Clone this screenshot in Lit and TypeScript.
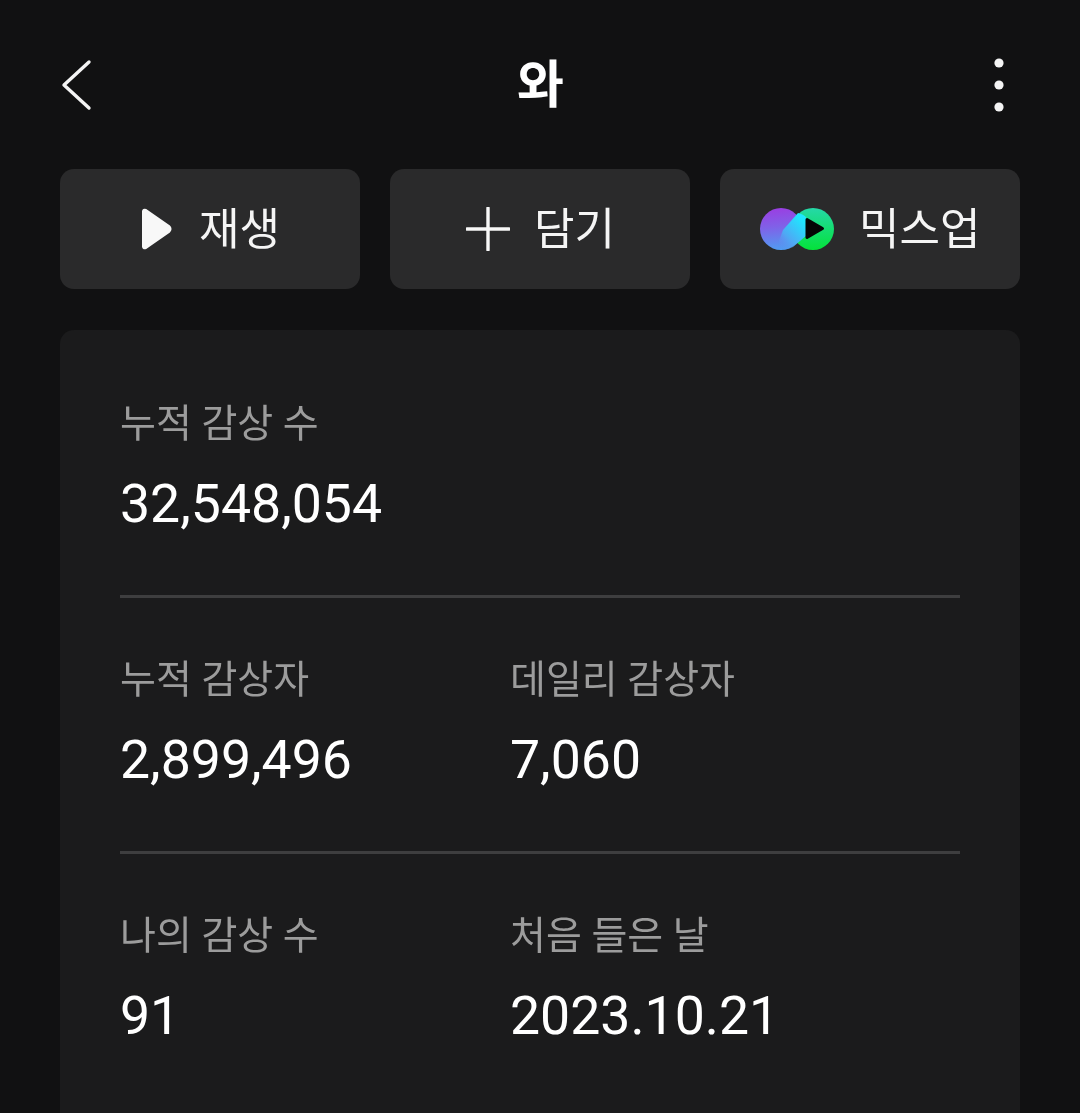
import { LitElement, html, css } from "lit";
import { customElement } from "lit/decorators.js";

@customElement("app-root")
export class AppRoot extends LitElement {
  static styles = css`
    :host {
      display: block;
      width: 1080px;
      height: 1113px;
      overflow: hidden;
      background: #111112;
      font-family: Roboto, "Noto Sans CJK KR", sans-serif;
      color: #fff;
    }
    .header {
      height: 169px;
      box-sizing: border-box;
      padding: 0 60px;
      display: grid;
      grid-template-columns: 1fr auto 1fr;
      align-items: center;
    }
    .header svg { display: block; }
    .more { justify-self: end; }
    .title {
      font-size: 51px;
      font-weight: 700;
      line-height: 51px;
      padding-top: 2px;
      will-change: transform;
    }
    .actions {
      display: grid;
      grid-template-columns: repeat(3, 300px);
      gap: 30px;
      padding: 0 60px;
    }
    .btn {
      height: 120px;
      border-radius: 14px;
      background: #2a2a2b;
      display: flex;
      align-items: center;
      justify-content: center;
      gap: 26px;
      font-size: 44px;
      color: #f5f5f5;
    }
    .btn.play { gap: 27px; }
    .btn.add { gap: 24px; }
    .btn.mix { gap: 25px; }
    .btn span {
      line-height: 44px;
      margin-top: 2px;
      will-change: transform;
    }
    .btn svg { display: block; flex: none; }
    .card {
      margin: 41px 60px 0;
      padding: 60px 60px 0;
      border-radius: 14px;
      background: #1b1b1c;
      height: 800px;
      box-sizing: border-box;
    }
    .row {
      display: grid;
      grid-template-columns: 390px 1fr;
      height: 205px;
      border-bottom: 3px solid #3e3e3f;
      margin-bottom: 48px;
    }
    .row:last-child { border-bottom: none; }
    .label {
      font-size: 39px;
      line-height: 66px;
      color: #9c9c9c;
      padding-top: 1px;
      will-change: transform;
    }
    .value {
      font-size: 53.6px;
      line-height: 62px;
      margin-top: 16px;
      color: #fff;
      will-change: transform;
    }
  `;

  private stat(label: string, value: string) {
    return html`<div><div class="label">${label}</div><div class="value">${value}</div></div>`;
  }

  render() {
    return html`
      <div class="header">
        <svg width="32" height="52" viewBox="0 0 32 52" fill="none">
          <path d="M29 3 L4 26 L29 49" stroke="#f4f4f4" stroke-width="3.4" stroke-linecap="round" stroke-linejoin="round"/>
        </svg>
        <div class="title">와</div>
        <svg class="more" width="42" height="56" viewBox="0 0 42 56">
          <circle cx="21" cy="6" r="4.6" fill="#f4f4f4"/>
          <circle cx="21" cy="28" r="4.6" fill="#f4f4f4"/>
          <circle cx="21" cy="50" r="4.6" fill="#f4f4f4"/>
        </svg>
      </div>
      <div class="actions">
        <div class="btn play">
          <svg width="32" height="42" viewBox="0 0 32 42">
            <path d="M3 3.5 Q3 1 6 2 L29 18 Q32 21 29 24 L6 40 Q3 41 3 38.5 Z" fill="#f8f8f8" stroke="#f8f8f8" stroke-width="2" stroke-linejoin="round"/>
          </svg>
          <span>재생</span>
        </div>
        <div class="btn add">
          <svg width="44" height="44" viewBox="0 0 44 44">
            <path d="M1 22 H43 M22 1 V43" stroke="#f8f8f8" stroke-width="3.4" stroke-linecap="round"/>
          </svg>
          <span>담기</span>
        </div>
        <div class="btn mix">
          <svg width="74" height="44" viewBox="0 0 74 44">
            <defs>
              <linearGradient id="l" x1="0.4" y1="0" x2="0.5" y2="1">
                <stop offset="0" stop-color="#9a3ee2"/>
                <stop offset="0.45" stop-color="#7f62e8"/>
                <stop offset="1" stop-color="#4f9df2"/>
              </linearGradient>
              <linearGradient id="r" x1="0.5" y1="0" x2="0.5" y2="1">
                <stop offset="0" stop-color="#25d8a8"/>
                <stop offset="1" stop-color="#04e23a"/>
              </linearGradient>
              <linearGradient id="m" gradientUnits="userSpaceOnUse" x1="18" y1="38" x2="44" y2="14">
                <stop offset="0" stop-color="#5a95f2" stop-opacity="0"/>
                <stop offset="0.35" stop-color="#4fa8f4"/>
                <stop offset="1" stop-color="#1ee8ff"/>
              </linearGradient>
            </defs>
            <circle cx="53" cy="22" r="21" fill="url(#r)"/>
            <circle cx="21" cy="22" r="21" fill="url(#l)"/>
            <path d="M23 23 L38 6 C42 7 46 9 47 12 L47 28 L33 40 A21 21 0 0 1 16 42 Z" fill="url(#m)"/>
            <path d="M47 12.5 L62.5 21.5 L47 30.5 Z" fill="#050505" stroke="#050505" stroke-width="3" stroke-linejoin="round"/>
          </svg>
          <span>믹스업</span>
        </div>
      </div>
      <div class="card">
        <div class="row">${this.stat("누적 감상 수", "32,548,054")}</div>
        <div class="row">${this.stat("누적 감상자", "2,899,496")}${this.stat("데일리 감상자", "7,060")}</div>
        <div class="row">${this.stat("나의 감상 수", "91")}${this.stat("처음 들은 날", "2023.10.21")}</div>
      </div>
    `;
  }
}
